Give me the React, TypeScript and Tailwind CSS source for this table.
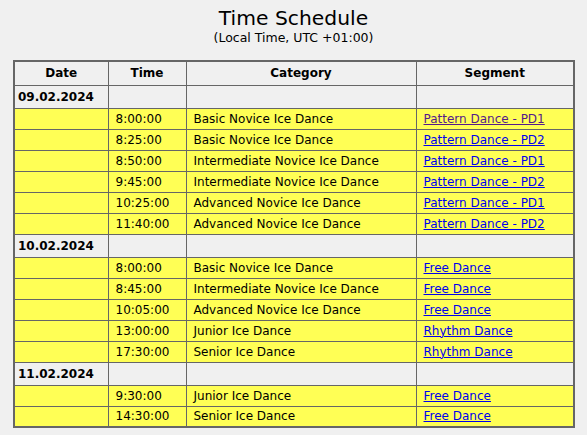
import React from "react";

type Item = { time: string; category: string; segment: string; visited?: boolean };
type Day = { date: string; items: Item[] };

const days: Day[] = [
  {
    date: "09.02.2024",
    items: [
      { time: "8:00:00", category: "Basic Novice Ice Dance", segment: "Pattern Dance - PD1", visited: true },
      { time: "8:25:00", category: "Basic Novice Ice Dance", segment: "Pattern Dance - PD2" },
      { time: "8:50:00", category: "Intermediate Novice Ice Dance", segment: "Pattern Dance - PD1" },
      { time: "9:45:00", category: "Intermediate Novice Ice Dance", segment: "Pattern Dance - PD2" },
      { time: "10:25:00", category: "Advanced Novice Ice Dance", segment: "Pattern Dance - PD1" },
      { time: "11:40:00", category: "Advanced Novice Ice Dance", segment: "Pattern Dance - PD2" },
    ],
  },
  {
    date: "10.02.2024",
    items: [
      { time: "8:00:00", category: "Basic Novice Ice Dance", segment: "Free Dance" },
      { time: "8:45:00", category: "Intermediate Novice Ice Dance", segment: "Free Dance" },
      { time: "10:05:00", category: "Advanced Novice Ice Dance", segment: "Free Dance" },
      { time: "13:00:00", category: "Junior Ice Dance", segment: "Rhythm Dance" },
      { time: "17:30:00", category: "Senior Ice Dance", segment: "Rhythm Dance" },
    ],
  },
  {
    date: "11.02.2024",
    items: [
      { time: "9:30:00", category: "Junior Ice Dance", segment: "Free Dance" },
      { time: "14:30:00", category: "Senior Ice Dance", segment: "Free Dance" },
    ],
  },
];

const cell = "border border-[#666666] align-middle";

export default function App() {
  return (
    <div className="min-h-[435px] bg-[#f0f0f0] pt-[5px] font-['DejaVu_Sans',Verdana,sans-serif] text-black">
      <h1 className="text-center text-[20.3px] leading-[26px]">Time Schedule</h1>
      <p className="text-center text-[12.5px] leading-[14px]">(Local Time, UTC +01:00)</p>

      <table className="ml-[13px] mt-[15px] w-[560px] table-fixed border-collapse border-2 border-[#666666] text-[12px]">
        <colgroup>
          <col className="w-[94px]" />
          <col className="w-[78px]" />
          <col className="w-[230px]" />
          <col className="w-[158px]" />
        </colgroup>
        <thead>
          <tr className="h-[24px]">
            <th className={`${cell} text-center font-bold`}>Date</th>
            <th className={`${cell} text-center font-bold`}>Time</th>
            <th className={`${cell} text-center font-bold`}>Category</th>
            <th className={`${cell} text-center font-bold`}>Segment</th>
          </tr>
        </thead>
        <tbody>
          {days.map((d) => (
            <React.Fragment key={d.date}>
              <tr className="h-[23px]">
                <td className={`${cell} pl-[3px] font-bold`}>{d.date}</td>
                <td className={cell}></td>
                <td className={cell}></td>
                <td className={cell}></td>
              </tr>
              {d.items.map((it, i) => (
                <tr key={i} className="h-[21px] bg-[#ffff55]">
                  <td className={cell}></td>
                  <td className={`${cell} pl-[7px]`}>{it.time}</td>
                  <td className={`${cell} pl-[7px]`}>{it.category}</td>
                  <td className={`${cell} pl-[7px]`}>
                    <a href="#" className={`underline ${it.visited ? "text-[#551a8b]" : "text-[#0000ee]"}`}>
                      {it.segment}
                    </a>
                  </td>
                </tr>
              ))}
            </React.Fragment>
          ))}
        </tbody>
      </table>
    </div>
  );
}
